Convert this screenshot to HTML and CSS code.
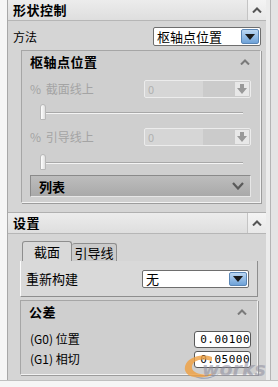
FILE: index.html
```html
<!DOCTYPE html>
<html lang="zh">
<head>
    <meta charset="UTF-8" />
    <title>形状控制</title>
    <link rel="stylesheet" href="styles.css">
</head>
<body>
<div class="frame">
    <div class="gutter"></div>
    <div class="main">

        <!-- 形状控制 -->
        <div class="hdr">
            <div class="hdr-title">形状控制</div>
            <div class="hdr-caret"><svg viewBox="0 0 10 6" width="10" height="6"><path d="M1 5.5 L5 1.5 L9 5.5" /></svg></div>
        </div>
        <div class="panel">
            <div class="row row-method">
                <span class="label">方法</span>
                <div class="combo combo-wide">
                    <span class="combo-text">枢轴点位置</span>
                    <span class="combo-btn"><svg viewBox="0 0 10 6" width="10" height="6"><path d="M0 0 L10 0 L5 6 Z" /></svg></span>
                </div>
            </div>

            <div class="sub">
                <div class="sub-hdr">
                    <span>枢轴点位置</span>
                    <svg class="caret-gray" viewBox="0 0 10 6" width="10" height="6"><path d="M1 5.5 L5 1.5 L9 5.5" /></svg>
                </div>
                <div class="row row-param first">
                    <span class="label dim">% 截面线上</span>
                    <div class="spin">
                        <span class="spin-text">0</span>
                        <span class="spin-btn"><svg viewBox="0 0 10 10" width="10" height="10"><path d="M3 0 H7 V4 H10 L5 10 L0 4 H3 Z" /></svg></span>
                    </div>
                </div>
                <div class="slider"><span class="thumb"></span><span class="track"></span></div>
                <div class="row row-param">
                    <span class="label dim">% 引导线上</span>
                    <div class="spin">
                        <span class="spin-text">0</span>
                        <span class="spin-btn"><svg viewBox="0 0 10 10" width="10" height="10"><path d="M3 0 H7 V4 H10 L5 10 L0 4 H3 Z" /></svg></span>
                    </div>
                </div>
                <div class="slider"><span class="thumb"></span><span class="track"></span></div>
                <div class="list-hdr">
                    <span>列表</span>
                    <svg viewBox="0 0 12 8" width="12" height="8"><path d="M1 1 L6 6.5 L11 1" /></svg>
                </div>
            </div>
        </div>

        <!-- 设置 -->
        <div class="hdr hdr-second">
            <div class="hdr-title">设置</div>
            <div class="hdr-caret"><svg viewBox="0 0 10 6" width="10" height="6"><path d="M1 5.5 L5 1.5 L9 5.5" /></svg></div>
        </div>
        <div class="panel panel-second">
            <div class="tabs">
                <span class="tab active">截面</span>
                <span class="tab">引导线</span>
            </div>
            <div class="tab-body">
                <span class="label">重新构建</span>
                <div class="combo">
                    <span class="combo-text">无</span>
                    <span class="combo-btn"><svg viewBox="0 0 10 6" width="10" height="6"><path d="M0 0 L10 0 L5 6 Z" /></svg></span>
                </div>
            </div>
            <div class="sub sub-tol">
                <div class="sub-hdr">
                    <span>公差</span>
                    <svg class="caret-gray" viewBox="0 0 10 6" width="10" height="6"><path d="M1 5.5 L5 1.5 L9 5.5" /></svg>
                </div>
                <div class="row row-tol first">
                    <span class="label mono">(G0) 位置</span>
                    <span class="num">0.00100</span>
                </div>
                <div class="row row-tol">
                    <span class="label mono">(G1) 相切</span>
                    <span class="num">0.05000</span>
                </div>
            </div>
        </div>
    </div>
    <div class="rgutter"></div>
</div>

<!-- 水印 -->
<div class="mark">
    <svg class="mark-swoosh" viewBox="0 0 40 26" width="40" height="26"><path d="M30 3 C16 -2 1 6 3 16 C5 25 22 26 34 19 C22 22 11 20 10 14 C9 7 19 3 30 7 Z" /><path class="tail" d="M12 22 C20 25 30 24 38 19 C30 25 20 27 12 22 Z" /></svg>
    <span class="mark-text">works</span>
</div>
</body>
</html>
```

FILE: styles.css
```css
body, html {
    margin: 0;
    padding: 0;
    width: 100%;
    height: 100%;
    background-color: #f6f6f6;
    font-family: "Noto Sans CJK SC", "DejaVu Sans", sans-serif;
    font-size: 12px;
    color: #000;
    overflow: hidden;
}

.frame {
    display: flex;
    height: 380px;
    border-bottom: 1px solid #c0c0c0;
}

.gutter {
    width: 7px;
    border-right: 1px solid #a8a8a8;
    background-color: #f6f6f6;
}

.main {
    width: 258px;
    display: flex;
    flex-direction: column;
    background-color: #d5d5d5;
}

.rgutter {
    width: 12px;
    background: linear-gradient(to right, #ececec 0, #ececec 4px, #b4b4b4 4px, #b4b4b4 5px, #e4e4e4 5px);
}

/* Заголовки панелей */
.hdr {
    display: flex;
    height: 20px;
    border-bottom: 1px solid #b6b6b6;
    background: linear-gradient(#ececec, #dedede);
}

.hdr-title {
    flex: 1;
    padding-left: 5px;
    font-weight: bold;
    line-height: 20px;
    font-size: 13px;
    letter-spacing: 0.5px;
}

.hdr-caret {
    width: 18px;
    border-left: 1px solid #c4c4c4;
    background: linear-gradient(#f4f4f4, #e8e8e8);
    display: flex;
    align-items: center;
    justify-content: center;
}

.hdr-caret svg path,
.caret-gray path {
    fill: none;
    stroke: #555;
    stroke-width: 2;
}

.caret-gray path {
    stroke: #7a7a7a;
}

.panel {
    padding: 0 5px 0 13px;
    height: 191px;
}

.hdr-second {
    border-top: 1px solid #b0b0b0;
}

.panel-second {
    flex: 1;
    padding: 0 8px 0 12px;
}

.row {
    display: flex;
    align-items: center;
}

.label {
    flex: 1;
    line-height: 14px;
}

.row-method {
    height: 27px;
    margin-left: -8px;
    padding-top: 2px;
}

.combo {
    width: 105px;
    height: 17px;
    display: flex;
    background-color: #fff;
    border: 1px solid #6e6e6e;
    border-radius: 2px;
}

.combo-wide {
    width: 106px;
}

.combo-text {
    flex: 1;
    padding-left: 3px;
    line-height: 17px;
    font-size: 13px;
}

.combo-btn {
    width: 16px;
    margin: 1px;
    border-radius: 2px;
    background: linear-gradient(#bcd7f2, #6ea2d8);
    border: 1px solid #5a86b6;
    display: flex;
    align-items: center;
    justify-content: center;
}

.combo-btn svg path {
    fill: #1a1a1a;
}

/* Вложенная панель */
.sub {
    border: 1px solid #a6a6a6;
    border-bottom-color: #f2f2f2;
    border-right-color: #f2f2f2;
    background-color: #cfcfcf;
    height: 151px;
    display: flex;
    flex-direction: column;
    box-shadow: 1px 1px 0 #9c9c9c;
}

.sub-hdr {
    display: flex;
    align-items: center;
    justify-content: space-between;
    height: 21px;
    padding: 0 10px 0 8px;
    font-weight: bold;
    font-size: 13px;
    letter-spacing: 0.5px;
}

.row-param {
    height: 26px;
    padding: 0 9px 0 8px;
}

.row-param.first {
    height: 22px;
    margin-top: 6px;
}

.dim {
    color: #a4a4a4;
    word-spacing: 2px;
}

.spin {
    width: 105px;
    height: 16px;
    display: flex;
    border: 1px solid #ececec;
    border-radius: 2px;
    background: linear-gradient(to right, #d6d6d6 0, #d6d6d6 58px, #cbcbcb 58px);
}

.spin-text {
    flex: 1;
    color: #b0b0b0;
    padding-left: 3px;
    font-size: 11px;
    line-height: 16px;
}

.spin-btn {
    width: 14px;
    margin: 1px;
    background-color: #e8e8e8;
    display: flex;
    align-items: center;
    justify-content: center;
}

.spin-btn svg path {
    fill: #9a9a9a;
}

.slider {
    height: 24px;
    position: relative;
    margin: 0 17px 0 18px;
}

.track {
    position: absolute;
    left: 3px;
    right: 0;
    top: 12px;
    height: 1px;
    background-color: #a8a8a8;
    border-bottom: 1px solid #f4f4f4;
}

.thumb {
    position: absolute;
    left: 0;
    top: 4px;
    width: 4px;
    height: 14px;
    border-radius: 3px 3px 1px 1px;
    background: linear-gradient(to right, #ffffff, #e0e0e0);
    border: 1px solid #b8b8b8;
    z-index: 1;
}

.list-hdr {
    margin: 1px 9px 0 8px;
    height: 20px;
    display: flex;
    align-items: center;
    justify-content: space-between;
    padding: 0 6px 0 8px;
    background: linear-gradient(#bdbdbd, #a9a9a9);
    border: 1px solid #8a8a8a;
    border-right-color: #e6e6e6;
    border-bottom-color: #e6e6e6;
    font-weight: bold;
    font-size: 13px;
}

.list-hdr svg path {
    fill: none;
    stroke: #5a5a5a;
    stroke-width: 2.2;
}

/* Вкладки */
.tabs {
    display: flex;
    margin-top: 7px;
    padding-left: 2px;
    height: 20px;
}

.tab {
    width: 44px;
    text-align: center;
    font-size: 13px;
    border: 1px solid #8e8e8e;
    border-bottom: none;
    border-radius: 3px 3px 0 0;
    background-color: #cbcbcb;
    margin-top: 2px;
    line-height: 18px;
}

.tab.active {
    width: 48px;
    margin-top: 0;
    line-height: 20px;
    background-color: #d9d9d9;
}

.tab + .tab {
    border-left: none;
}

.tab-body {
    display: flex;
    align-items: center;
    height: 35px;
    padding: 0 8px 0 5px;
    border: 1px solid #8e8e8e;
    border-top: none;
    border-left-color: #fbfbfb;
    background-color: #d9d9d9;
}

.tab-body .label {
    font-size: 13px;
}

.tab-body .combo {
    height: 16px;
}

.tab-body .combo-text {
    line-height: 16px;
}

.sub-tol {
    margin-top: 3px;
    height: 73px;
}

.row-tol {
    height: 20px;
    padding: 0 6px 0 9px;
}

.row-tol.first {
    margin-top: 7px;
}

.mono {
    font-size: 12px;
}

.num {
    width: 55px;
    height: 15px;
    line-height: 15px;
    background-color: #fff;
    border: 1px solid #5a5a5a;
    border-radius: 3px;
    text-align: right;
    font-family: "DejaVu Sans Mono", monospace;
    font-size: 11px;
    overflow: hidden;
    white-space: nowrap;
    letter-spacing: 0.5px;
}

/* Водяной знак */
.mark {
    position: absolute;
    left: 182px;
    top: 354px;
    display: flex;
    align-items: center;
    opacity: 0.8;
    pointer-events: none;
}

.mark-swoosh path {
    fill: #f0a040;
}

.mark-swoosh .tail {
    fill: #8090b0;
}

.mark-text {
    margin-left: -20px;
    margin-top: 4px;
    font-family: "DejaVu Sans", sans-serif;
    font-weight: bold;
    font-style: italic;
    font-size: 19px;
    color: #9090a0;
    opacity: 0.7;
}
```
